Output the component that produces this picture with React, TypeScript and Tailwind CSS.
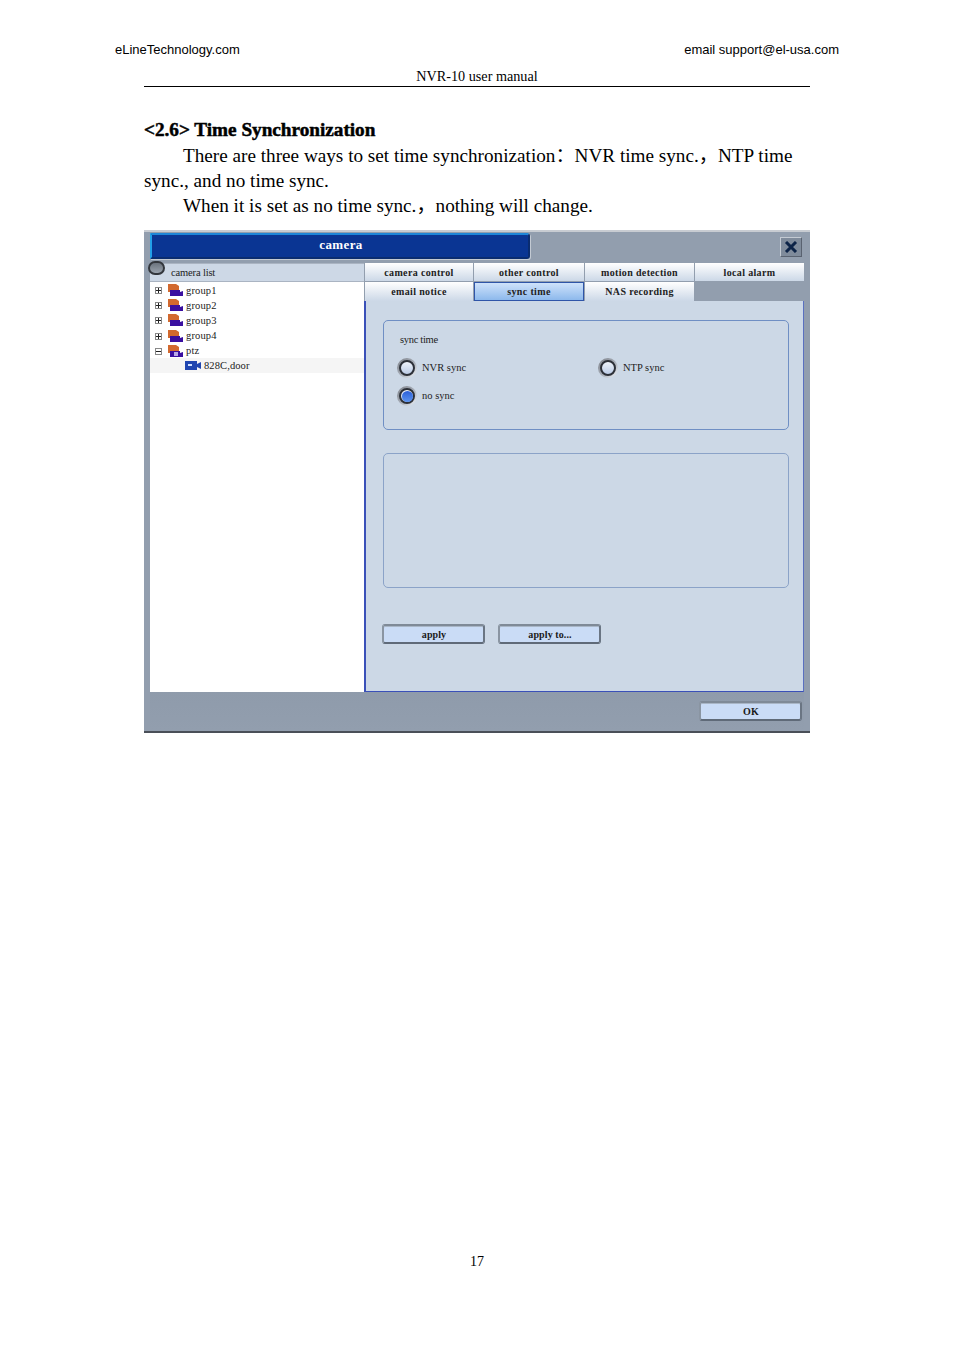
import type { ReactNode } from "react";

const serif = "font-['Liberation_Serif','Noto_Sans_CJK_SC',serif]";

function FolderIcon({ open }: { open?: boolean }) {
  return (
    <svg width="16" height="13" viewBox="0 0 16 13" className="shrink-0">
      <path d="M0 0h8l3 2v6H0z" fill="#d2692f" />
      <path d="M2 6h10v2l3-1v5H2z" fill="#3a0fa0" />
      {open && <rect x="6" y="7" width="4" height="4" fill="#b9a8e8" />}
    </svg>
  );
}

function TreeRow({ label, open }: { label: string; open?: boolean }) {
  return (
    <div className="flex h-[15.2px] items-center pl-[5px]">
      <div className="flex h-[7px] w-[7px] items-center justify-center border border-[#888] bg-white">
        <svg width="5" height="5" viewBox="0 0 5 5">
          <path d={open ? "M0 2.5h5" : "M0 2.5h5M2.5 0v5"} stroke="#222" strokeWidth="1" />
        </svg>
      </div>
      <div className="ml-[6px]">
        <FolderIcon open={open} />
      </div>
      <span className="ml-[2px] text-[10.5px] tracking-[0.15px] text-[#222]">{label}</span>
    </div>
  );
}

function Tab({ label, active, w }: { label: string; active?: boolean; w: string }) {
  return (
    <div
      className={`flex h-full items-center justify-center text-[10px] font-bold tracking-[0.35px] text-[#222] ${w} ${
        active
          ? "border border-[#2f55a8] bg-gradient-to-b from-[#cfe2fa] to-[#8db9ec]"
          : "bg-gradient-to-b from-white to-[#ccd8e7]"
      }`}
    >
      {label}
    </div>
  );
}

function Radio({ checked, label }: { checked?: boolean; label: string }) {
  return (
    <div className="flex items-center">
      <div className="flex h-[20px] w-[20px] items-center justify-center rounded-full bg-gradient-to-br from-[#7d828a] via-[#a5abb5] to-[#f2f6fb]">
        <div className="flex h-[16px] w-[16px] items-center justify-center rounded-full border-2 border-[#2c3038] bg-gradient-to-b from-[#eef3fb] to-[#bccce6]">
          {checked && <div className="h-[11px] w-[11px] rounded-full bg-gradient-to-b from-[#2c5fd8] to-[#5c93ee]" />}
        </div>
      </div>
      <span className="ml-[5px] text-[10.5px] text-[#222]">{label}</span>
    </div>
  );
}

function Btn({ children }: { children: ReactNode }) {
  return (
    <div className="flex h-[20px] w-[103px] items-center justify-center rounded-[3px] border-2 border-t-[#7f8a97] border-r-[#6a7583] border-b-[#5f6a78] border-l-[#8a95a2] bg-[#cadcf6] pl-[1px] text-[10px] font-bold tracking-[0.1px] text-[#1a1a1a] shadow-[inset_0_1px_0_#a9b6c6]">
      {children}
    </div>
  );
}

export default function App() {
  return (
    <div className={`flex h-[1350px] w-[954px] flex-col bg-white text-black ${serif}`}>
      {/* Page header */}
      <div className="flex justify-between px-[115px] pt-[42px] font-['Liberation_Sans',sans-serif] text-[13px] leading-[16px]">
        <span>eLineTechnology.com</span>
        <span>email support@el-usa.com</span>
      </div>

      <div className="flex flex-1 flex-col px-[144px]">
        <div className="mt-[10px] border-b border-black pb-[2px] text-center text-[14.2px] leading-[16px]">
          NVR-10 user manual
        </div>

        <h1 className="mt-[30px] text-[19.2px] leading-[25px] font-bold [-webkit-text-stroke:0.5px_black]">
          {"<2.6> Time Synchronization"}
        </h1>
        <p className="mt-[1px] indent-[39px] text-[19.2px] leading-[25px]">
          There are three ways to set time synchronization：NVR time sync.，NTP time sync., and no time sync.
        </p>
        <p className="indent-[39px] text-[19.2px] leading-[25px]">
          When it is set as no time sync.，nothing will change.
        </p>

        {/* Camera settings window */}
        <div className="mt-[12px] flex h-[503px] flex-col border-t-2 border-b-2 border-t-[#c8ccd2] border-b-[#4a4f58] bg-[#929eae] px-[6px]">
          <div className="flex h-[31px] shrink-0 items-start justify-between">
            <div className="mt-[1px] flex h-[26px] w-[380px] items-center justify-center rounded-r-[3px] border-2 border-t-[#1d86d8] border-r-[#0a2c70] border-b-[#0a2c70] border-l-[#22a0e8] bg-[#0a3593] pb-[2px] pl-[2px] text-[13px] font-bold tracking-[0.4px] text-white shadow-[1px_1px_0_#c3cad3]">
              camera
            </div>
            <div className="mt-[5px] mr-[2px] flex h-[20px] w-[22px] items-center justify-center border border-t-[#c3cad3] border-r-[#596270] border-b-[#596270] border-l-[#c3cad3] bg-[#7f8b9b]">
              <svg width="14" height="12" viewBox="0 0 14 12">
                <path d="M2 1l10 10M12 1L2 11" stroke="#0c2347" strokeWidth="3" />
              </svg>
            </div>
          </div>

          <div className="flex h-[429px] shrink-0">
            {/* Camera list */}
            <div className="relative flex w-[214px] shrink-0 flex-col bg-white">
              <div className="absolute top-[-2px] left-[-2px] h-[14px] w-[17px] rounded-full border-2 border-[#33373d] bg-gradient-to-b from-[#6c747e] to-[#9aa3ae]" />
              <div className="flex h-[19px] shrink-0 items-center border-t border-b border-t-[#aab4c2] border-b-[#aab4c2] bg-[#cdd8e6] pt-[1px] pl-[21px] text-[10.5px] tracking-[-0.15px] text-[#222]">
                camera list
              </div>
              <div className="pt-[1px]">
                <TreeRow label="group1" />
                <TreeRow label="group2" />
                <TreeRow label="group3" />
                <TreeRow label="group4" />
                <TreeRow label="ptz" open />
                <div className="-mt-[1px] flex h-[15px] items-center bg-[#f5f5f5] pl-[35px]">
                  <svg width="16" height="9" viewBox="0 0 16 9" className="shrink-0">
                    <path d="M0 0h12v3l4-2v7l-4-2v3H0z" fill="#1f45b0" />
                    <rect x="3" y="3" width="4" height="2" fill="#cfe0ff" />
                  </svg>
                  <span className="ml-[3px] text-[10.5px] tracking-[0.1px] text-[#222]">828C,door</span>
                </div>
              </div>
            </div>

            {/* Tabs and panel */}
            <div className="flex min-w-0 flex-1 flex-col">
              <div className="ml-[1px] flex h-[18px] shrink-0 gap-[1px]">
                <Tab label="camera control" w="w-[108px]" />
                <Tab label="other control" w="w-[110px]" />
                <Tab label="motion detection" w="w-[109px]" />
                <Tab label="local alarm" w="w-[109px]" />
              </div>
              <div className="mt-[1px] ml-[1px] flex h-[19px] shrink-0 gap-[1px]">
                <Tab label="email notice" w="w-[108px]" />
                <Tab label="sync time" active w="w-[110px]" />
                <Tab label="NAS recording" w="w-[109px]" />
              </div>
              <div className="flex flex-1 flex-col border-r border-b border-l-2 border-r-[#5a70c0] border-b-[#3a50b8] border-l-[#3a50b8] bg-[#ccd8e6] pt-[19px] pr-[14px] pl-[17px]">
                <div className="h-[110px] rounded-[5px] border border-[#6f8fc4] px-[13px] pt-[12px]">
                  <div className="ml-[3px] text-[10.5px] leading-[14px] tracking-[-0.3px] text-[#222]">sync time</div>
                  <div className="mt-[11px] flex">
                    <div className="w-[201px]">
                      <Radio label="NVR sync" />
                    </div>
                    <Radio label="NTP sync" />
                  </div>
                  <div className="mt-[8px]">
                    <Radio checked label="no sync" />
                  </div>
                </div>
                <div className="mt-[23px] h-[135px] rounded-[5px] border border-[#8ba3c8]" />
                <div className="mt-[36px] -ml-[1px] flex gap-[13px]">
                  <Btn>apply</Btn>
                  <Btn>apply to...</Btn>
                </div>
              </div>
            </div>
          </div>

          <div className="flex flex-1 items-start justify-end bg-gradient-to-b from-[#8f9bab] to-[#929eae] pt-[9px] pr-[2px]">
            <Btn>OK</Btn>
          </div>
        </div>

        <div className="mt-auto mb-[80px] text-center text-[14px] leading-[16px]">17</div>
      </div>
    </div>
  );
}
